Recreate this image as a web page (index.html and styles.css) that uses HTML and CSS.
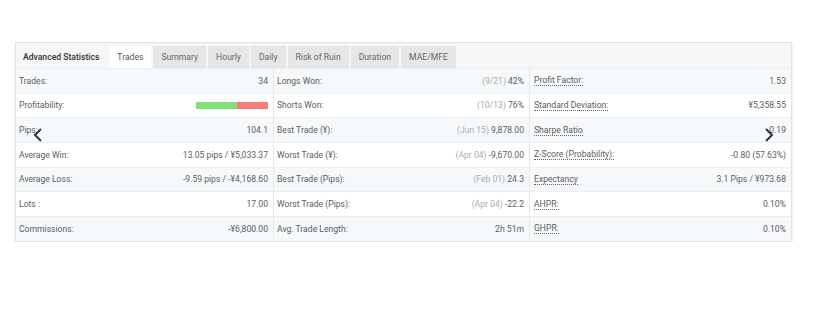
FILE: index.html
```html
<!DOCTYPE html>
<html>
<head>
<meta charset="utf-8">
<link rel="stylesheet" href="styles.css">
</head>
<body>
<div class="page">
  <div class="card">
    <div class="tabbar">
      <div class="title">Advanced Statistics</div>
      <div class="tab active">Trades</div>
      <div class="tab">Summary</div>
      <div class="tab">Hourly</div>
      <div class="tab">Daily</div>
      <div class="tab">Risk of Ruin</div>
      <div class="tab">Duration</div>
      <div class="tab">MAE/MFE</div>
    </div>
    <div class="rows">
      <div class="row">
        <div class="cell"><span>Trades:</span><span class="val">34</span></div>
        <div class="cell"><span>Longs Won:</span><span class="val"><span class="muted">(9/21)</span> 42%</span></div>
        <div class="cell"><span class="dotted">Profit Factor:</span><span class="val">1.53</span></div>
      </div>
      <div class="row">
        <div class="cell"><span>Profitability:</span><span class="bar"><span class="win"></span><span class="loss"></span></span></div>
        <div class="cell"><span>Shorts Won:</span><span class="val"><span class="muted">(10/13)</span> 76%</span></div>
        <div class="cell"><span class="dotted">Standard Deviation:</span><span class="val">¥5,358.55</span></div>
      </div>
      <div class="row">
        <div class="cell"><span>Pips:</span><span class="val">104.1</span></div>
        <div class="cell"><span>Best Trade (¥):</span><span class="val"><span class="muted">(Jun 15)</span> 9,878.00</span></div>
        <div class="cell"><span class="dotted">Sharpe Ratio</span><span class="val">0.19</span></div>
      </div>
      <div class="row">
        <div class="cell"><span>Average Win:</span><span class="val">13.05 pips / ¥5,033.37</span></div>
        <div class="cell"><span>Worst Trade (¥):</span><span class="val"><span class="muted">(Apr 04)</span> -9,670.00</span></div>
        <div class="cell"><span class="dotted">Z-Score (Probability):</span><span class="val">-0.80 (57.63%)</span></div>
      </div>
      <div class="row">
        <div class="cell"><span>Average Loss:</span><span class="val">-9.59 pips / -¥4,168.60</span></div>
        <div class="cell"><span>Best Trade (Pips):</span><span class="val"><span class="muted">(Feb 01)</span> 24.3</span></div>
        <div class="cell"><span class="dotted">Expectancy</span><span class="val">3.1 Pips / ¥973.68</span></div>
      </div>
      <div class="row">
        <div class="cell"><span>Lots :</span><span class="val">17.00</span></div>
        <div class="cell"><span>Worst Trade (Pips):</span><span class="val"><span class="muted">(Apr 04)</span> -22.2</span></div>
        <div class="cell"><span class="dotted">AHPR:</span><span class="val">0.10%</span></div>
      </div>
      <div class="row">
        <div class="cell"><span>Commissions:</span><span class="val">-¥6,800.00</span></div>
        <div class="cell"><span>Avg. Trade Length:</span><span class="val">2h 51m</span></div>
        <div class="cell"><span class="dotted">GHPR:</span><span class="val">0.10%</span></div>
      </div>
    </div>
    <svg class="arrow left" width="12" height="16" viewBox="0 0 12 16"><path d="M9 2 L3 8 L9 14" fill="none" stroke="#333" stroke-width="2"/></svg>
    <svg class="arrow right" width="12" height="16" viewBox="0 0 12 16"><path d="M3 2 L9 8 L3 14" fill="none" stroke="#333" stroke-width="2"/></svg>
  </div>
</div>
</body>
</html>
```
FILE: styles.css
```css
* { box-sizing: border-box; }
body { margin: 0; background: #fff; font-family: Roboto, "Liberation Sans", sans-serif; font-size: 8.6px; color: #5c5c5c; }
.page { padding: 42px 0 0 15px; }
.card { position: relative; width: 777px; border: 1px solid #e2e2e2; box-shadow: 0 2px 3px rgba(0,0,0,0.12); background: #fff; }
.tabbar { display: flex; align-items: flex-end; height: 25px; background: #f6f6f6; padding-top: 2px; }
.title { padding: 0 10px 0 7px; line-height: 22px; color: #333; font-weight: 500; }
.tab { line-height: 22px; padding: 0 8px; background: #e6e6e6; color: #666; margin-right: 2px; }
.tab.active { background: #fff; color: #555; }
.rows { display: flex; flex-direction: column; }
.row { display: grid; grid-template-columns: 258px 256px 1fr; height: 24.67px; border-top: 1px solid #eeeeee; }
.row:nth-child(odd) { background: #f6f9fb; }
.cell { display: flex; align-items: center; justify-content: space-between; padding: 0 5px 0 3px; border-right: 1px solid #e8e8e8; }
.cell:last-child { border-right: none; padding-right: 5px; padding-left: 4px; }
.val { color: #5c5c5c; }
.muted { color: #aaa; }
.dotted { border-bottom: 1px dotted #666; line-height: 10px; }
.bar { display: flex; width: 72px; height: 7px; }
.win { width: 41px; background: #80e07a; }
.loss { flex: 1; background: #f47c7c; }
.arrow { position: absolute; top: 84px; }
.arrow.left { left: 16px; }
.arrow.right { left: 747px; }
```
